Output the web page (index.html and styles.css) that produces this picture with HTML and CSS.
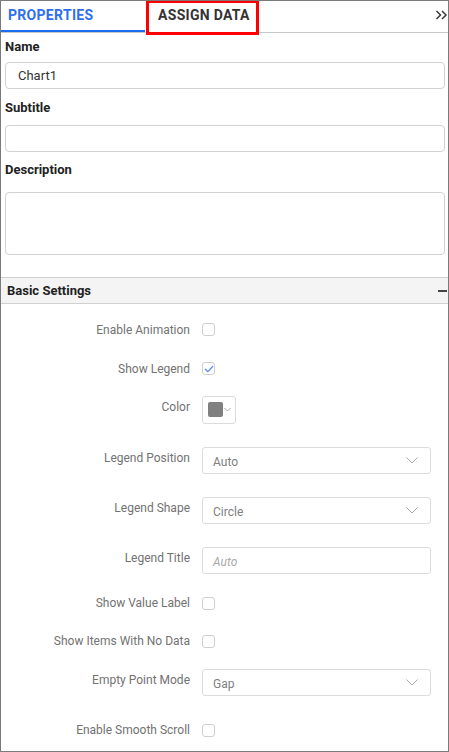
FILE: index.html
```html
<!DOCTYPE html>
<html>
<head>
<meta charset="utf-8">
<link rel="stylesheet" href="styles.css">
</head>
<body>
<div class="panel">
  <div class="tabs">
    <div class="tab active">PROPERTIES</div>
    <div class="tab second">ASSIGN DATA<span class="highlight"></span></div>
    <div class="collapse">
      <svg width="13" height="10" viewBox="0 0 13 10"><path d="M1.5 1 L5.5 5 L1.5 9 M7 1 L11 5 L7 9" fill="none" stroke="#3a3a3a" stroke-width="1.5"/></svg>
    </div>
  </div>
  <div class="general">
    <div class="field-label">Name</div>
    <div class="input">Chart1</div>
    <div class="field-label sub">Subtitle</div>
    <div class="input sub-in"></div>
    <div class="field-label desc">Description</div>
    <div class="input textarea"></div>
  </div>
  <div class="section-head">
    <span>Basic Settings</span>
    <span class="minus"></span>
  </div>
  <div class="settings">
    <div class="row"><div class="lbl">Enable Animation</div><div class="ctl"><span class="check"></span></div></div>
    <div class="row"><div class="lbl">Show Legend</div><div class="ctl"><span class="check">
      <svg width="10" height="8" viewBox="0 0 10 8"><path d="M1 4 L3.8 6.6 L9 1.2" fill="none" stroke="#5d8ef2" stroke-width="1.3"/></svg>
    </span></div></div>
    <div class="row color-row"><div class="lbl">Color</div><div class="ctl"><span class="picker"><span class="swatch"></span>
      <svg width="7" height="5" viewBox="0 0 7 5"><path d="M0.5 1 L3.5 4 L6.5 1" fill="none" stroke="#999" stroke-width="0.9"/></svg>
    </span></div></div>
    <div class="row drop-row"><div class="lbl">Legend Position</div><div class="ctl"><div class="dropdown"><span>Auto</span>
      <svg width="12" height="7" viewBox="0 0 12 7"><path d="M0.5 0.5 L6 6 L11.5 0.5" fill="none" stroke="#aaa" stroke-width="1"/></svg>
    </div></div></div>
    <div class="row drop-row"><div class="lbl">Legend Shape</div><div class="ctl"><div class="dropdown"><span>Circle</span>
      <svg width="12" height="7" viewBox="0 0 12 7"><path d="M0.5 0.5 L6 6 L11.5 0.5" fill="none" stroke="#aaa" stroke-width="1"/></svg>
    </div></div></div>
    <div class="row drop-row"><div class="lbl">Legend Title</div><div class="ctl"><div class="dropdown text"><span class="ph">Auto</span></div></div></div>
    <div class="row check-row vl"><div class="lbl">Show Value Label</div><div class="ctl"><span class="check"></span></div></div>
    <div class="row check-row"><div class="lbl">Show Items With No Data</div><div class="ctl"><span class="check"></span></div></div>
    <div class="row drop-row ep"><div class="lbl">Empty Point Mode</div><div class="ctl"><div class="dropdown"><span>Gap</span>
      <svg width="12" height="7" viewBox="0 0 12 7"><path d="M0.5 0.5 L6 6 L11.5 0.5" fill="none" stroke="#aaa" stroke-width="1"/></svg>
    </div></div></div>
    <div class="row last"><div class="lbl">Enable Smooth Scroll</div><div class="ctl"><span class="check"></span></div></div>
  </div>
</div>
</body>
</html>
```
FILE: styles.css
```css
* { box-sizing: border-box; }
html, body { margin: 0; padding: 0; background: #fff; }
body { font-family: Roboto, "Noto Sans", Arial, sans-serif; }
.panel {
  width: 449px;
  height: 752px;
  border: 1px solid #7a7a7a;
  overflow: hidden;
  background: #fff;
}
.tabs {
  display: flex;
  height: 32px;
  border-bottom: 1px solid #c8c8c8;
  position: relative;
}
.tab {
  font-size: 14px;
  font-weight: 700;
  line-height: 28px;
  height: 31px;
  letter-spacing: 0.3px;
}
.tab.active {
  width: 144px;
  padding-left: 7px;
  color: #2e6ff0;
  border-bottom: 2px solid #1a6cf0;
}
.tab.second {
  position: relative;
  margin-left: 13px;
  color: #333;
}
.highlight {
  position: absolute;
  left: -12px;
  top: -1px;
  width: 113px;
  height: 35px;
  border: 3px solid #ff0000;
}
.collapse {
  margin-left: auto;
  padding-top: 9px;
  width: 13px;
}
.collapse svg { display: block; }
.general { padding: 6px 3px 0 4px; }
.field-label {
  font-size: 13px;
  font-weight: 700;
  color: #222;
  line-height: 16px;
  margin-bottom: 7px;
}
.field-label.sub { margin-bottom: 9px; }
.field-label.desc { margin-bottom: 14px; }
.input {
  height: 27px;
  border: 1px solid #d2d2d2;
  border-radius: 4px;
  font-size: 13px;
  color: #333;
  padding-left: 12px;
  line-height: 25px;
  margin-bottom: 11px;
}
.input.sub-in { margin-bottom: 10px; }
.input.textarea { height: 63px; margin-bottom: 22px; }
.section-head {
  height: 27px;
  background: #f4f4f4;
  border-top: 1px solid #d0d0d0;
  border-bottom: 1px solid #d0d0d0;
  display: flex;
  align-items: center;
  justify-content: space-between;
  padding: 0 1px 0 6px;
  font-size: 13px;
  font-weight: 700;
  color: #222;
}
.minus {
  width: 9px;
  height: 2px;
  background: #444;
}
.settings { padding-top: 6px; }
.row {
  display: flex;
  align-items: center;
  height: 39px;
}
.lbl {
  width: 189px;
  text-align: right;
  font-size: 12px;
  color: #727272;
}
.ctl { margin-left: 12px; display: flex; align-items: center; }
.check {
  width: 13px;
  height: 13px;
  border: 1px solid #cfcfcf;
  border-radius: 3px;
  display: flex;
  align-items: center;
  justify-content: center;
}
.picker {
  width: 34px;
  height: 28px;
  border: 1px solid #dcdcdc;
  border-radius: 3px;
  display: flex;
  align-items: center;
  padding-left: 5px;
  gap: 1px;
}
.swatch {
  width: 15px;
  height: 15px;
  background: #808080;
  border-radius: 2px;
}
.color-row { height: 43px; }
.color-row .lbl { padding-bottom: 5px; }
.drop-row { height: 50px; align-items: flex-start; padding-top: 16px; }
.drop-row .lbl { line-height: 23px; }
.dropdown {
  width: 229px;
  height: 27px;
  border: 1px solid #dcdcdc;
  border-radius: 3px;
  display: flex;
  align-items: center;
  justify-content: space-between;
  padding: 0 12px 0 10px;
  font-size: 12px;
  color: #808080;
}
.dropdown span { padding-top: 2px; }
.ph { font-style: italic; color: #aaa; }
.check-row { height: 38px; }
.check-row.vl { margin-top: 3px; }
.drop-row.ep { padding-top: 9px; }
.row.last { height: 40px; }
```
